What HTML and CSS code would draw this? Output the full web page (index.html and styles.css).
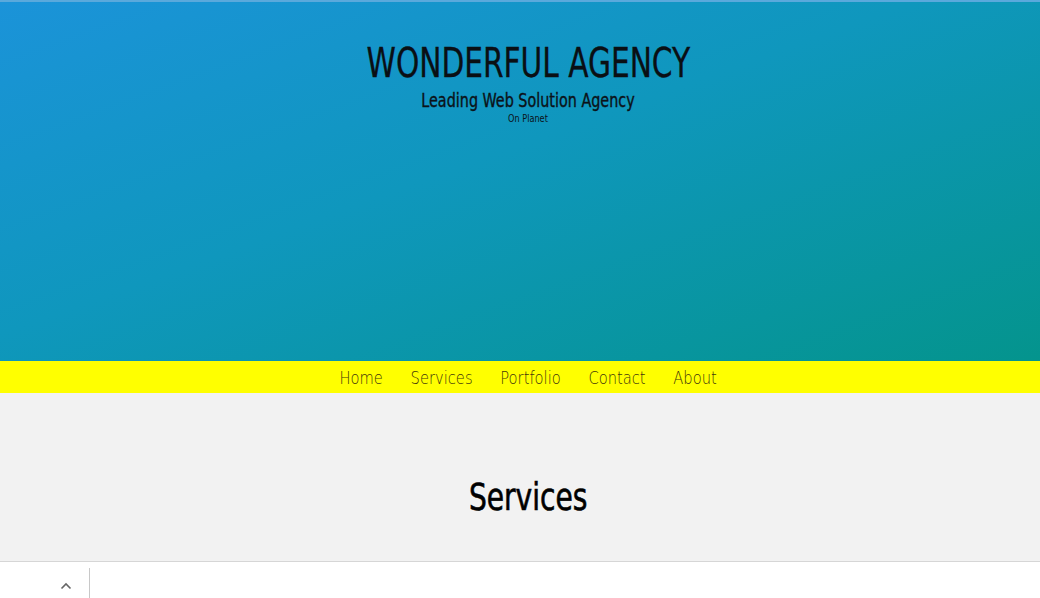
FILE: index.html
```html
<!DOCTYPE html>
<html>
<head>
<meta charset="utf-8">
<link rel="stylesheet" href="styles.css">
</head>
<body>
<header class="hero">
  <h1 class="title">WONDERFUL AGENCY</h1>
  <p class="subtitle">Leading Web Solution Agency</p>
  <p class="tag">On Planet</p>
</header>
<nav class="nav">
  <div class="nav-inner">
    <a href="#">Home</a>
    <a href="#">Services</a>
    <a href="#">Portfolio</a>
    <a href="#">Contact</a>
    <a href="#">About</a>
  </div>
</nav>
<section class="services">
  <h2>Services</h2>
</section>
<div class="bottombar">
  <div class="toggle">
    <svg width="12" height="8" viewBox="0 0 12 8"><path d="M1.5 6.5 L6 2 L10.5 6.5" fill="none" stroke="#666" stroke-width="1.6"/></svg>
  </div>
  <div class="divider"></div>
</div>
</body>
</html>
```
FILE: styles.css
```css
html, body { margin: 0; padding: 0; }
body {
  width: 1040px;
  height: 598px;
  overflow: hidden;
  font-family: "DejaVu Sans Condensed", "DejaVu Sans", sans-serif;
  background: #f2f2f2;
}
.hero {
  height: 361px;
  box-sizing: border-box;
  border-top: 2px solid #5aa9dc;
  background: linear-gradient(160deg, #1b93d9 0%, #0f97bd 45%, #04948d 100%);
  display: flex;
  flex-direction: column;
  align-items: center;
  padding-top: 38px;
  padding-left: 16px;
}
.title {
  margin: 0;
  font-weight: normal;
  font-size: 40px;
  line-height: 46px;
  color: #0a0f14;
  transform: scaleX(0.824);
  -webkit-text-stroke: 0.3px #0a0f14;
}
.subtitle {
  margin: 3px 0 0;
  font-size: 19px;
  line-height: 22px;
  color: #0b1218;
  transform: scaleX(0.84);
  -webkit-text-stroke: 0.35px #0b1218;
}
.tag {
  margin: 2px 0 0;
  font-size: 10px;
  line-height: 12px;
  color: #0b1218;
  transform: scaleX(0.91);
}
.nav {
  height: 32px;
  box-sizing: border-box;
  padding-top: 2px;
  background: #ffff00;
  display: flex;
  justify-content: center;
  align-items: center;
}
.nav-inner {
  display: flex;
  gap: 32px;
  transform: scaleX(0.865);
  margin-left: 17px;
}
.nav a {
  font-family: "DejaVu Sans", sans-serif;
  color: #43370c;
  text-decoration: none;
  font-size: 17px;
  font-weight: 200;
}
.services {
  height: 168px;
  box-sizing: border-box;
  padding-top: 81px;
  display: flex;
  justify-content: center;
}
.services h2 {
  margin: 0 0 0 16px;
  font-weight: normal;
  font-size: 37px;
  line-height: 48px;
  color: #000;
  transform: scaleX(0.845);
  -webkit-text-stroke: 0.6px #000;
}
.bottombar {
  height: 37px;
  background: #fff;
  border-top: 1px solid #d6d6d6;
  display: flex;
  align-items: stretch;
}
.toggle {
  width: 89px;
  box-sizing: border-box;
  display: flex;
  justify-content: flex-end;
  align-items: center;
  padding-right: 17px;
  padding-top: 10px;
}
.divider {
  width: 1px;
  background: #c8c8c8;
  margin-top: 6px;
}
```
